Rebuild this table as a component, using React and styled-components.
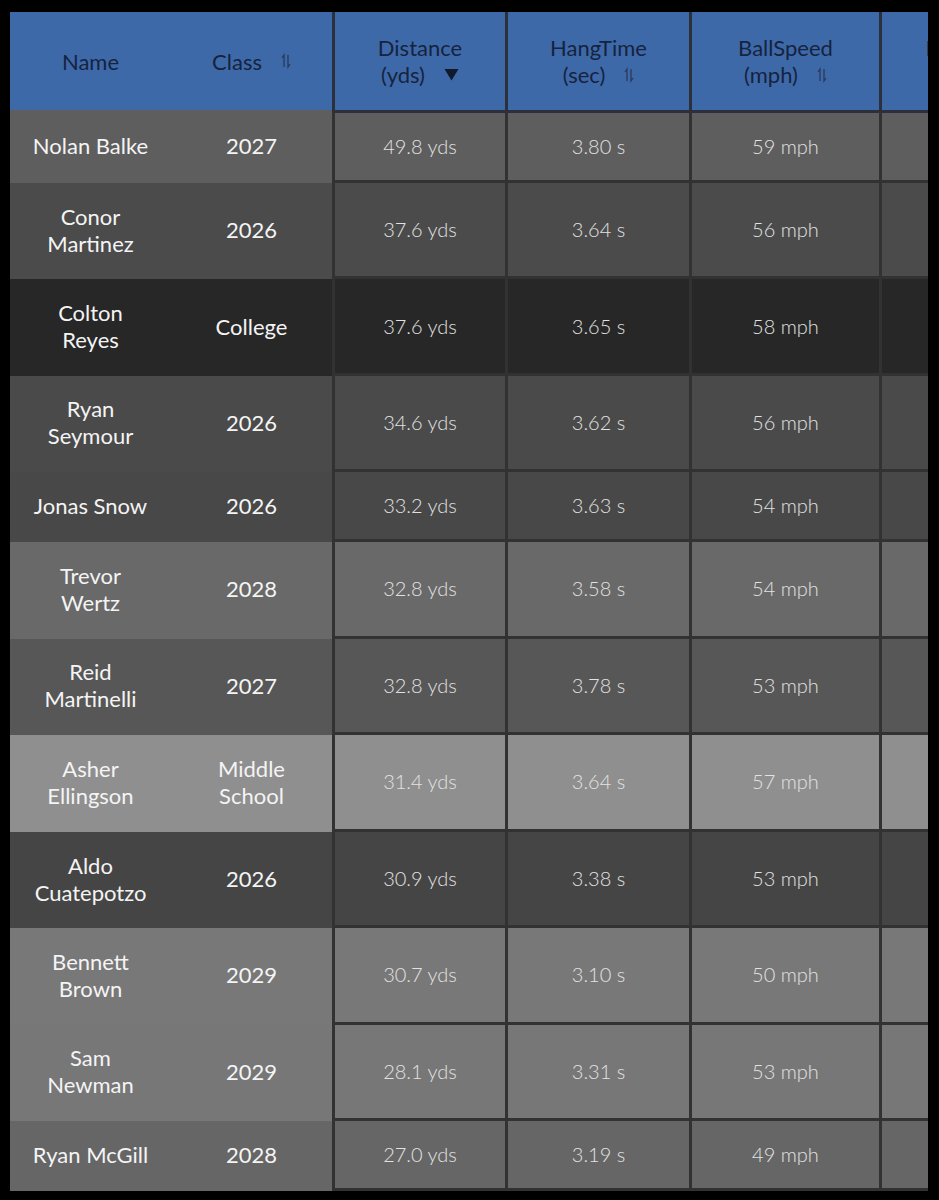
import React, { Fragment } from "react";
import styled, { createGlobalStyle } from "styled-components";

const players = [
  { name: "Nolan Balke", cls: "2027", dist: "49.8", hang: "3.80", speed: 59, angle: "41.2", bg: "#5e5e5e" },
  { name: "Conor Martinez", cls: "2026", dist: "37.6", hang: "3.64", speed: 56, angle: "44.0", bg: "#4b4b4b" },
  { name: "Colton Reyes", cls: "College", dist: "37.6", hang: "3.65", speed: 58, angle: "43.1", bg: "#272727" },
  { name: "Ryan Seymour", cls: "2026", dist: "34.6", hang: "3.62", speed: 56, angle: "45.3", bg: "#4a4a4a" },
  { name: "Jonas Snow", cls: "2026", dist: "33.2", hang: "3.63", speed: 54, angle: "46.8", bg: "#484848" },
  { name: "Trevor Wertz", cls: "2028", dist: "32.8", hang: "3.58", speed: 54, angle: "44.9", bg: "#696969" },
  { name: "Reid Martinelli", cls: "2027", dist: "32.8", hang: "3.78", speed: 53, angle: "48.2", bg: "#575757" },
  { name: "Asher Ellingson", cls: "Middle School", dist: "31.4", hang: "3.64", speed: 57, angle: "42.7", bg: "#8f8f8f" },
  { name: "Aldo Cuatepotzo", cls: "2026", dist: "30.9", hang: "3.38", speed: 53, angle: "43.5", bg: "#454545" },
  { name: "Bennett Brown", cls: "2029", dist: "30.7", hang: "3.10", speed: 50, angle: "39.8", bg: "#787878" },
  { name: "Sam Newman", cls: "2029", dist: "28.1", hang: "3.31", speed: 53, angle: "41.6", bg: "#777777" },
  { name: "Ryan McGill", cls: "2028", dist: "27.0", hang: "3.19", speed: 49, angle: "40.4", bg: "#666666" },
];

const GlobalStyle = createGlobalStyle`
  body {
    margin: 0;
    background: #000;
    font-family: Lato, "Noto Sans", sans-serif;
  }
`;

const Page = styled.div`
  padding: 12px 0 0 10px;
`;

const Viewport = styled.div`
  width: 918px;
  overflow: hidden;
`;

const Grid = styled.div`
  display: grid;
  grid-template-columns: 161px 161px 173px 184px 190px 215px;
  width: max-content;
`;

const HeadCell = styled.div`
  display: flex;
  align-items: center;
  justify-content: center;
  align-self: start;
  height: ${(p) => (p.$frozen ? "98px" : "101px")};
  box-sizing: border-box;
  background: #3e69a8;
  color: #16233f;
  font-size: 22px;
  line-height: 27px;
  text-align: center;
  white-space: nowrap;
  border-left: ${(p) => (p.$frozen ? "none" : "3px solid #2b303a")};
  border-bottom: ${(p) => (p.$frozen ? "none" : "3px solid #2b303a")};
`;

const HeadLine = styled.div`
  display: flex;
  align-items: center;
  justify-content: center;
  gap: 19px;
`;

const Cell = styled.div`
  display: flex;
  align-items: center;
  justify-content: center;
  padding: ${(p) => (p.$tall ? "19.7px" : "20px")} 0;
  box-sizing: border-box;
  background: ${(p) => p.$bg};
  line-height: 27px;
  text-align: center;
  font-size: ${(p) => (p.$frozen ? "22px" : "20px")};
  color: ${(p) => (p.$frozen ? "#f4f4f4" : "#e2e2e2")};
  font-weight: ${(p) => (p.$frozen ? 400 : 300)};
  border-left: ${(p) => (p.$frozen ? "none" : "3px solid #323232")};
  border-bottom: 3px solid ${(p) => (p.$frozen ? "transparent" : "#323232")};
  margin-top: ${(p) => (p.$first && p.$frozen ? "-3px" : "0")};
`;

const Wrap = styled.span`
  max-width: 120px;
`;

const SortIcon = () => (
  <svg width="10" height="16" viewBox="0 0 10 16" fill="none" stroke="#2a3a5c" strokeWidth="1.3">
    <path d="M3 14V2L1 5" />
    <path d="M7 2v12l2-3" />
  </svg>
);

const SortDown = () => (
  <svg width="15" height="13" viewBox="0 0 15 13">
    <path d="M0.5 1h14L7.5 12.5z" fill="#111a2c" />
  </svg>
);

const StatHead = ({ title, unit, active }) => (
  <HeadCell>
    <div>
      {title}
      <HeadLine>
        {unit} {active ? <SortDown /> : <SortIcon />}
      </HeadLine>
    </div>
  </HeadCell>
);

export default function App() {
  return (
    <Page>
      <GlobalStyle />
      <Viewport>
        <Grid>
          <HeadCell $frozen>Name</HeadCell>
          <HeadCell $frozen>
            <HeadLine>
              Class <SortIcon />
            </HeadLine>
          </HeadCell>
          <StatHead title="Distance" unit="(yds)" active />
          <StatHead title="HangTime" unit="(sec)" />
          <StatHead title="BallSpeed" unit="(mph)" />
          <StatHead title="LaunchAngle" unit="(deg)" />

          {players.map((p, i) => (
            <Fragment key={p.name}>
              <Cell $frozen $tall $first={i === 0} $bg={p.bg}>
                <Wrap>{p.name}</Wrap>
              </Cell>
              <Cell $frozen $first={i === 0} $bg={p.bg}>
                <Wrap>{p.cls}</Wrap>
              </Cell>
              <Cell $bg={p.bg}>{p.dist} yds</Cell>
              <Cell $bg={p.bg}>{p.hang} s</Cell>
              <Cell $bg={p.bg}>{p.speed} mph</Cell>
              <Cell $bg={p.bg}>{p.angle}°</Cell>
            </Fragment>
          ))}
        </Grid>
      </Viewport>
    </Page>
  );
}
